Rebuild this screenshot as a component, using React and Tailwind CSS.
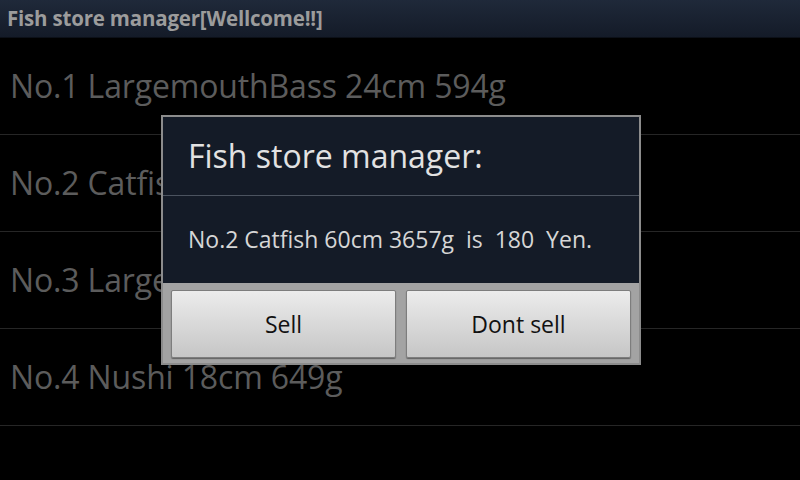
const fish = [
  'No.1 LargemouthBass 24cm 594g',
  'No.2 Catfish 60cm 3657g',
  'No.3 LargemouthBass 31cm 812g',
  'No.4 Nushi 18cm 649g',
]

const App = () => {
  return (
    <div className='relative w-[800px] h-[480px] overflow-hidden bg-black' style={{ fontFamily: '"Open Sans", "DejaVu Sans", sans-serif' }}>
      {/* title bar */}
      <div className='h-[38px] flex items-center px-[7px] bg-gradient-to-b from-[#1f293a] to-[#141b28] border-b border-[#0c1018]'>
        <span className='text-[20.5px] font-bold text-[#9c9c9c] tracking-[-0.2px]'>Fish store manager[Wellcome!!]</span>
      </div>

      {/* list (dimmed behind dialog) */}
      <div className='flex flex-col'>
        {fish.map((f) => (
          <div key={f} className='h-[97px] flex items-center pl-[10px] border-b border-[#262626]'>
            <span className='text-[32px] text-[#5c5c5c] tracking-[-0.15px]'>{f}</span>
          </div>
        ))}
      </div>

      {/* dialog */}
      <div className='absolute inset-0 flex items-center justify-center pl-[2px]'>
        <div className='w-[480px] h-[250px] border-2 border-[#8c8c8c] bg-[#141b27] flex flex-col'>
          <div className='h-[79px] flex items-center pl-[25px] border-b border-[#4b535f]'>
            <span className='text-[32px] text-[#e2e2e2]'>Fish store manager:</span>
          </div>
          <div className='h-[87px] flex items-center pl-[25px]'>
            <span className='text-[23px] text-[#d6d6d6] whitespace-pre'>No.2 Catfish 60cm 3657g  is  180  Yen.</span>
          </div>
          <div className='flex-1 bg-[#a3a3a3] flex gap-[10px] px-[8px] pt-[7px] pb-[5px]'>
            <button className='flex-1 rounded-[2px] border border-[#7d7d7d] bg-gradient-to-b from-[#ececec] to-[#c6c6c6] text-[23px] text-[#111] shadow-[0_1px_1px_rgba(0,0,0,0.4)]'>Sell</button>
            <button className='flex-1 rounded-[2px] border border-[#7d7d7d] bg-gradient-to-b from-[#ececec] to-[#c6c6c6] text-[23px] text-[#111] shadow-[0_1px_1px_rgba(0,0,0,0.4)]'>Dont sell</button>
          </div>
        </div>
      </div>
    </div>
  )
}

export default App
